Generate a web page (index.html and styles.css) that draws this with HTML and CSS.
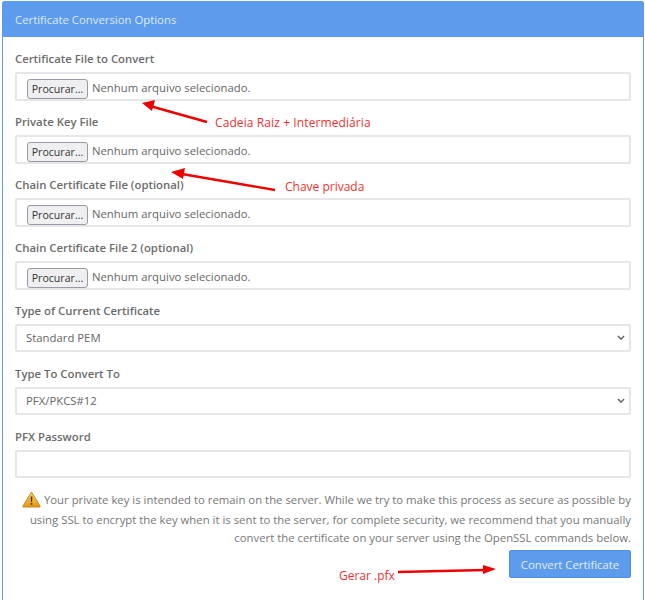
FILE: index.html
```html
<!DOCTYPE html>
<html>
<head>
	<meta charset="utf-8">
	<meta name="viewport" content="width=device-width, initial-scale=1">
	<title>Certificate Conversion Options</title>
	<link rel="stylesheet" href="styles.css">
</head>
<body>

<div class="panel">
	<div class="panel-heading">Certificate Conversion Options</div>
	<form class="panel-body">
		<div class="field">
			<label>Certificate File to Convert</label>
			<div class="control"><button type="button" class="browse">Procurar...</button> <span>Nenhum arquivo selecionado.</span></div>
		</div>
		<div class="field">
			<label>Private Key File</label>
			<div class="control"><button type="button" class="browse">Procurar...</button> <span>Nenhum arquivo selecionado.</span></div>
		</div>
		<div class="field">
			<label>Chain Certificate File (optional)</label>
			<div class="control"><button type="button" class="browse">Procurar...</button> <span>Nenhum arquivo selecionado.</span></div>
		</div>
		<div class="field">
			<label>Chain Certificate File 2 (optional)</label>
			<div class="control"><button type="button" class="browse">Procurar...</button> <span>Nenhum arquivo selecionado.</span></div>
		</div>
		<div class="field">
			<label>Type of Current Certificate</label>
			<select class="control"><option>Standard PEM</option></select>
		</div>
		<div class="field">
			<label>Type To Convert To</label>
			<select class="control"><option>PFX/PKCS#12</option></select>
		</div>
		<div class="field">
			<label>PFX Password</label>
			<input type="password" class="control">
		</div>
		<p class="notice">
			<svg class="warn" width="19" height="17" viewBox="0 0 19 17">
				<defs><linearGradient id="amber" x1="0" y1="0" x2="0" y2="1"><stop offset="0" stop-color="#f8d36a"/><stop offset="1" stop-color="#e8940f"/></linearGradient></defs>
				<path d="M9.5 1 L18.2 15.2 Q18.4 16 17.6 16 L1.4 16 Q.6 16 .8 15.2 Z" fill="url(#amber)" stroke="#b9770f" stroke-width=".8"/>
				<path d="M8.6 5.5 H10.4 L10 11 H9 Z" fill="#4a3205"/>
				<rect x="8.7" y="12" width="1.6" height="1.8" fill="#4a3205"/>
			</svg>
			Your private key is intended to remain on the server. While we try to make this process as secure as possible by using SSL to encrypt the key when it is sent to the server, for complete security, we recommend that you manually convert the certificate on your server using the OpenSSL commands below.
		</p>
		<div class="actions"><button type="button" class="submit">Convert Certificate</button></div>
	</form>

	<!-- anotacoes em vermelho por cima do formulario -->
	<svg class="arrows" width="645" height="600" viewBox="0 0 645 600">
		<g stroke="#f00000" stroke-width="2.4" fill="#f00000">
			<line x1="207" y1="122" x2="150" y2="106"/>
			<path d="M142 103 L155 100 L152 111 Z" stroke="none"/>
			<line x1="275" y1="190" x2="182" y2="174"/>
			<path d="M171 172 L185 168 L183 179 Z" stroke="none"/>
			<line x1="398" y1="572" x2="485" y2="570"/>
			<path d="M496 569 L483 565 L483 574 Z" stroke="none"/>
		</g>
	</svg>
	<span class="note note-chain">Cadeia Raiz + Intermediária</span>
	<span class="note note-key">Chave privada</span>
	<span class="note note-pfx">Gerar .pfx</span>
</div>

</body>
</html>
```

FILE: styles.css
```css
html, body {
	margin: 0;
	height: 600px;
	overflow: hidden;
	background: #fff;
}

body {
	font-family: "Open Sans", sans-serif;
	font-size: 11.35px;
	color: #666;
}

.panel {
	position: relative;
	margin: 1px 1px 0 2px;
	border: 1px solid #5d9cec;
	border-radius: 2px 2px 0 0;
}

.panel-heading {
	padding: 9px 12px 9px;
	line-height: 17px;
	background: #5d9cec;
	color: #dfeafa;
}

.panel-body {
	padding: 13px 12px 40px;
}

.field {
	height: 63px;
}

.field label {
	display: block;
	margin: 0 0 5px;
	line-height: 17px;
	font-weight: 600;
	color: #6b6b6b;
}

.control {
	display: block;
	box-sizing: border-box;
	width: 100%;
	height: 28px;
	padding: 0 10px;
	background: #fff;
	border: 2px solid #e6e6e6;
	border-radius: 2px;
	font-family: "Open Sans", sans-serif;
	font-size: 11.35px;
	color: #666;
}

div.control {
	height: 29px;
	line-height: 28px;
	white-space: nowrap;
}

select.control {
	appearance: none;
	padding: 0 10px 2px 9px;
	background: #fff url("data:image/svg+xml,%3Csvg xmlns='http://www.w3.org/2000/svg' width='8' height='6'%3E%3Cpath d='M1 1l3 3.2L7 1' fill='none' stroke='%23666' stroke-width='1.6'/%3E%3C/svg%3E") no-repeat right 4px center;
}

.browse {
	box-sizing: border-box;
	height: 20px;
	width: 61px;
	padding: 0;
	margin-right: 1px;
	background: #efeff1;
	border: 1px solid #9a9aa6;
	border-radius: 3px;
	font-family: "Open Sans", sans-serif;
	font-size: 10.6px;
	color: #333;
	vertical-align: -1px;
}

.notice {
	margin: 0;
	text-align: right;
	line-height: 17.5px;
	font-size: 11.35px;
	color: #777;
}

.warn {
	margin-bottom: 3px;
	vertical-align: -7px;
}

.actions {
	margin-top: 4px;
	text-align: right;
}

.submit {
	height: 28px;
	width: 122px;
	padding: 0;
	background: #5d9cec;
	border: 1px solid #4f8fe0;
	border-radius: 2px;
	font-family: "Open Sans", sans-serif;
	font-size: 11.35px;
	color: #e2ecfa;
}

/* anotacoes */
.arrows {
	position: absolute;
	left: -3px;
	top: -2px;
	pointer-events: none;
}

.note {
	position: absolute;
	font-size: 12px;
	line-height: 16px;
	color: #f23030;
	white-space: nowrap;
}

.note-chain { left: 212px; top: 113px; letter-spacing: .1px; }
.note-key { left: 282px; top: 177px; }
.note-pfx { left: 336px; top: 566px; }
```
